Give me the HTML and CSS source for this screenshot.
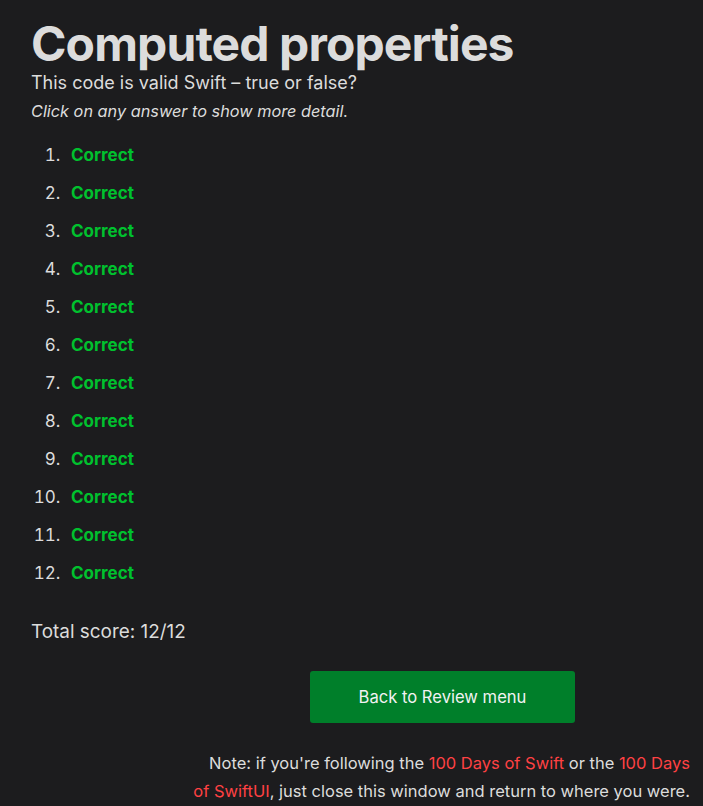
FILE: index.html
```html
<!DOCTYPE html>
<html lang="en">
<head>
<meta charset="utf-8">
<title>Computed properties</title>
<link rel="stylesheet" href="styles.css">
</head>
<body>
<main class="page">
  <h1 class="title">Computed properties</h1>
  <p class="question">This code is valid Swift – true or false?</p>
  <p class="hint">Click on any answer to show more detail.</p>
  <ol class="answers">
    <li><span class="correct">Correct</span></li>
    <li><span class="correct">Correct</span></li>
    <li><span class="correct">Correct</span></li>
    <li><span class="correct">Correct</span></li>
    <li><span class="correct">Correct</span></li>
    <li><span class="correct">Correct</span></li>
    <li><span class="correct">Correct</span></li>
    <li><span class="correct">Correct</span></li>
    <li><span class="correct">Correct</span></li>
    <li><span class="correct">Correct</span></li>
    <li><span class="correct">Correct</span></li>
    <li><span class="correct">Correct</span></li>
  </ol>
  <p class="score">Total score: 12/12</p>
  <div class="actions">
    <a class="btn" href="#">Back to Review menu</a>
  </div>
  <p class="note">Note: if you're following the <a href="#">100 Days of Swift</a> or the <a href="#">100 Days of SwiftUI</a>, just close this window and return to where you were.</p>
</main>
</body>
</html>
```
FILE: styles.css
```css
html, body {
  margin: 0;
  padding: 0;
  background: #1c1c1e;
}
body {
  font-family: Inter, "Noto Sans", sans-serif;
  color: #dcdcdc;
}
.page {
  padding: 18px 13px 0 31px;
}
.title {
  margin: 0;
  font-size: 48px;
  font-weight: 700;
  line-height: 52px;
  letter-spacing: -0.9px;
  color: #dcdcdc;
}
.question {
  margin: 0;
  font-size: 18px;
  line-height: 26px;
}
.hint {
  margin: 2px 0 0 0;
  font-size: 16.3px;
  font-style: italic;
  line-height: 26px;
}
.answers {
  margin: 12px 0 0 0;
  padding-left: 34px;
  font-size: 17px;
  line-height: 38px;
}
.answers li {
  padding-left: 6px;
}
.answers li::marker {
  color: #dcdcdc;
}
.correct {
  color: #00c12e;
  font-weight: 700;
}
.score {
  margin: 26px 0 0 0;
  font-size: 18.9px;
  line-height: 28px;
}
.actions {
  display: flex;
  justify-content: flex-end;
  margin-top: 25px;
  padding-right: 115px;
}
.btn {
  display: flex;
  align-items: center;
  justify-content: center;
  width: 265px;
  height: 52px;
  background: #007f2a;
  color: #f2f2f2;
  border-radius: 3px;
  font-size: 16.6px;
  text-decoration: none;
}
.note {
  max-width: 500px;
  margin: 26px 0 0 auto;
  text-align: right;
  font-size: 16.5px;
  line-height: 28px;
}
.note a {
  color: #ff4143;
  text-decoration: none;
}
```
